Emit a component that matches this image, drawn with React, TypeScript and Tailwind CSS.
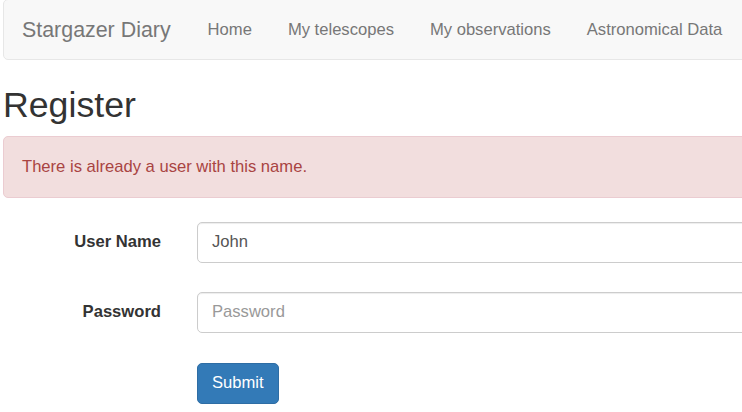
import React from "react";

export default function App() {
  const font = { fontFamily: '"Liberation Sans", Arial, sans-serif' };
  return (
    <div className="w-[742px] h-[412px] overflow-hidden bg-white" style={font}>
      <div className="w-[820px] pl-[3px]">
        {/* Navbar */}
        <div className="mt-[-1px] h-[61px] border border-[#e7e7e7] bg-[#f8f8f8] rounded-[5px] flex items-start">
          <div className="pl-[18px] pr-[19px] pt-[18px] text-[21.4px] leading-[24px] text-[#777]">Stargazer Diary</div>
          <div className="flex">
            {["Home", "My telescopes", "My observations", "Astronomical Data"].map((t) => (
              <div key={t} className="px-[18px] pt-[18px] text-[16.6px] leading-[24px] text-[#777]">
                {t}
              </div>
            ))}
          </div>
        </div>

        {/* Heading */}
        <h2 className="mt-[26px] mb-[11px] text-[35.7px] leading-[39px] font-normal text-[#333]">Register</h2>

        {/* Alert */}
        <div className="border border-[#ebccd1] bg-[#f2dede] rounded-[5px] px-[18px] pt-[18px] pb-[19px] text-[16.6px] leading-[23px] text-[#a94442]">
          There is already a user with this name.
        </div>

        {/* Form */}
        <div className="mt-[24px] flex flex-col">
          <div className="flex items-center">
            <div className="w-[158px] text-right font-bold text-[16.6px] text-[#333]">User Name</div>
            <div className="ml-[36px] flex-1 h-[41px] border border-[#ccc] rounded-[5px] shadow-[inset_0_1px_1px_rgba(0,0,0,0.075)] px-[14px] flex items-center text-[16.6px] text-[#555]">
              John
            </div>
          </div>
          <div className="mt-[29px] flex items-center">
            <div className="w-[158px] text-right font-bold text-[16.6px] text-[#333]">Password</div>
            <div className="ml-[36px] flex-1 h-[41px] border border-[#ccc] rounded-[5px] shadow-[inset_0_1px_1px_rgba(0,0,0,0.075)] px-[14px] flex items-center text-[16.6px] text-[#999]">
              Password
            </div>
          </div>
          <div className="mt-[30px] flex">
            <div className="ml-[194px] h-[41px] px-[14px] flex items-center bg-[#337ab7] border border-[#2e6da4] rounded-[5px] text-white text-[16.6px]">
              Submit
            </div>
          </div>
        </div>
      </div>
    </div>
  );
}
